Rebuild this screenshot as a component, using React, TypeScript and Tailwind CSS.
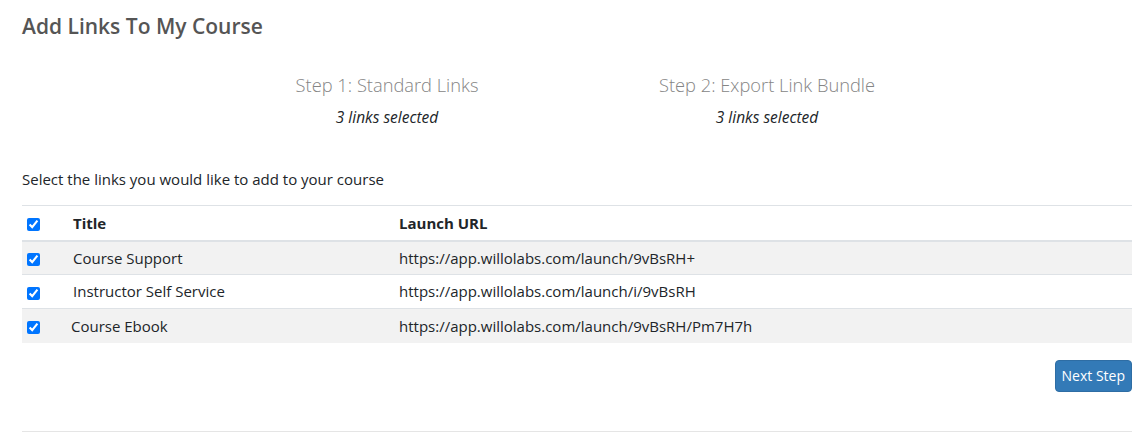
import React, { useState } from 'react';

const links = [
  { id: 1, title: 'Course Support', url: 'https://app.willolabs.com/launch/9vBsRH+', shift: false },
  { id: 2, title: 'Instructor Self Service', url: 'https://app.willolabs.com/launch/i/9vBsRH', shift: false },
  { id: 3, title: 'Course Ebook', url: 'https://app.willolabs.com/launch/9vBsRH/Pm7H7h', shift: true },
];

export default function App() {
  const [selected, setSelected] = useState<number[]>([1, 2, 3]);
  const allChecked = selected.length === links.length;

  const toggle = (id: number) =>
    setSelected((s) => (s.includes(id) ? s.filter((x) => x !== id) : [...s, id]));

  return (
    <div className="pl-[22px] pr-[14px] pt-[12px] bg-white text-[#212529] font-['Segoe_UI','Open_Sans',sans-serif] text-[15px]">
      <h1 className="text-[21px] leading-[28px] font-semibold text-[#555]">Add Links To My Course</h1>

      {/* Steps */}
      <div className="mx-auto w-[760px] grid grid-cols-2 mt-[32px]">
        <div className="text-center">
          <div className="text-[18.3px] leading-[26px] font-light text-[#858585]">Step 1: Standard Links</div>
          <div className="italic text-[15.5px] leading-[20px] mt-[9px]">{selected.length} links selected</div>
        </div>
        <div className="text-center">
          <div className="text-[18.3px] leading-[26px] font-light text-[#858585]">Step 2: Export Link Bundle</div>
          <div className="italic text-[15.5px] leading-[20px] mt-[9px]">{selected.length} links selected</div>
        </div>
      </div>

      <p className="mt-[42px] text-[15px] leading-[20px]">Select the links you would like to add to your course</p>

      <table className="w-full table-fixed border-collapse mt-[16px] text-[15px]">
        <colgroup>
          <col className="w-[43px]" />
          <col className="w-[326px]" />
          <col />
        </colgroup>
        <thead>
          <tr className="border-t border-[#dee2e6] border-b-2 border-b-[#dee2e6] h-[35px]">
            <th className="pl-[5px] text-left align-middle">
              <input
                type="checkbox"
                checked={allChecked}
                onChange={() => setSelected(allChecked ? [] : links.map((l) => l.id))}
                className="w-[13px] h-[13px] m-0 align-middle"
              />
            </th>
            <th className="px-2 text-left font-bold">Title</th>
            <th className="px-2 text-left font-bold">Launch URL</th>
          </tr>
        </thead>
        <tbody>
          {links.map((l, i) => (
            <tr
              key={l.id}
              className={`h-[34px] ${i < links.length - 1 ? 'border-b border-[#dee2e6]' : ''} ${i % 2 === 0 ? 'bg-[#f2f2f2]' : 'bg-white'}`}
            >
              <td className="pl-[5px] align-middle">
                <input
                  type="checkbox"
                  checked={selected.includes(l.id)}
                  onChange={() => toggle(l.id)}
                  className="w-[13px] h-[13px] m-0 align-middle"
                />
              </td>
              <td className={`px-2 ${l.shift ? '-translate-x-[2px]' : ''}`}>{l.title}</td>
              <td className="px-2">{l.url}</td>
            </tr>
          ))}
        </tbody>
      </table>

      <div className="flex justify-end mt-[17px]">
        <button className="bg-[#337ab7] hover:bg-[#286090] text-white text-[14px] leading-[20px] px-[6px] py-[5px] rounded-[4px] border border-[#2e6da4]">
          Next Step
        </button>
      </div>

      <hr className="mt-[39px] border-t border-[#e5e5e5]" />
    </div>
  );
}
